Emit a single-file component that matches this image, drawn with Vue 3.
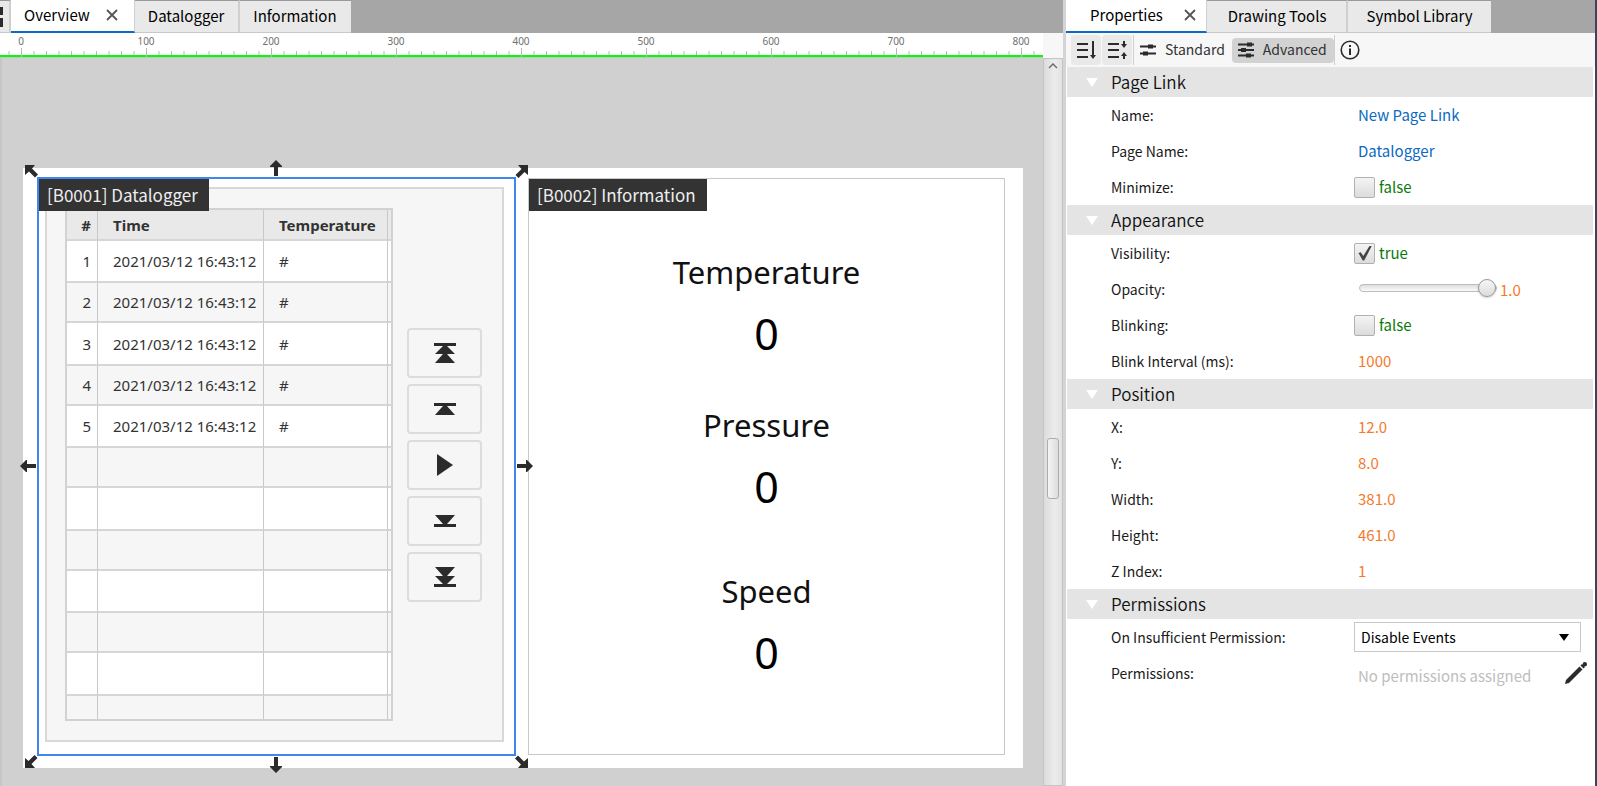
<template>
  <div class="editor">
    <main class="workspace">
      <nav class="tab-bar">
        <button class="tab tab-home" aria-label="Home">
          <svg width="3" height="20" viewBox="0 0 3 20"><path d="M0 0h3v8H0zM0 11h3v9H0z" fill="#2b2b2b" /></svg>
        </button>
        <button v-for="tab in pageTabs" :key="tab" class="tab" :class="{ active: tab === activePage }" @click="activePage = tab">
          {{ tab }}
          <svg v-if="tab === activePage" class="tab-close" width="12" height="12" viewBox="0 0 12 12">
            <path d="M1 1l10 10M11 1L1 11" stroke="#555" stroke-width="1.8" />
          </svg>
        </button>
      </nav>

      <div class="stage">
        <div class="stage-main">
          <svg class="ruler" height="25">
            <rect x="0" y="22" width="100%" height="2" fill="#00ff00" />
            <g v-for="tick in ticks" :key="tick.value">
              <rect :x="tick.x" :y="tick.major ? 15 : 18" width="1" :height="tick.major ? 9 : 4" fill="#b8b8b8" />
              <text v-if="tick.major" :x="tick.x" y="12" text-anchor="middle">{{ tick.value }}</text>
            </g>
          </svg>

          <div class="canvas">
            <div class="page">
              <!-- Datalogger page link, selected -->
              <section class="block selected" :style="blockStyle(blocks[0])">
                <h3 class="block-tag">{{ blocks[0].title }}</h3>
                <div class="logger">
                  <div class="logger-table">
                    <table>
                      <thead>
                        <tr>
                          <th class="col-no">#</th>
                          <th class="col-time">Time</th>
                          <th class="col-value">Temperature</th>
                          <th class="col-end"></th>
                        </tr>
                      </thead>
                      <tbody>
                        <tr v-for="n in 12" :key="n">
                          <td class="col-no">{{ n <= 5 ? n : '' }}</td>
                          <td>{{ n <= 5 ? '2021/03/12 16:43:12' : '' }}</td>
                          <td>{{ n <= 5 ? '#' : '' }}</td>
                          <td class="col-end"></td>
                        </tr>
                      </tbody>
                    </table>
                  </div>
                  <div class="pager">
                    <button v-for="btn in pagerButtons" :key="btn.label" :aria-label="btn.label">
                      <svg width="22" height="22" viewBox="0 0 22 22"><path :d="btn.path" fill="#2b2b2b" /></svg>
                    </button>
                  </div>
                </div>

                <!-- Resize handles -->
                <svg v-for="h in sideHandles" :key="h" class="handle side" :class="h" viewBox="0 0 16 16">
                  <path d="M8 0l6 6v1h-4v9H6V7H2V6z" />
                </svg>
                <svg v-for="h in cornerHandles" :key="h" class="handle corner" :class="h" viewBox="0 0 13 13">
                  <path d="M0 0h10L7 3.500l6 6L10 12.500l-6-6L0 10z" />
                </svg>
              </section>

              <!-- Information page link -->
              <section class="block" :style="blockStyle(blocks[1])">
                <h3 class="block-tag">{{ blocks[1].title }}</h3>
                <div v-for="r in readouts" :key="r.label" class="readout" :style="{ top: r.y + 'px' }">
                  <div class="readout-label">{{ r.label }}</div>
                  <div class="readout-value">{{ r.value }}</div>
                </div>
              </section>
            </div>
          </div>
        </div>

        <div class="scroll-side">
          <div class="scroll-corner"></div>
          <div class="scroll-track">
            <svg width="10" height="6" viewBox="0 0 10 6"><path d="M1 5l4-4 4 4" fill="none" stroke="#666" stroke-width="1.3" /></svg>
            <div class="scroll-thumb"></div>
          </div>
        </div>
      </div>
    </main>

    <aside class="panel">
      <nav class="tab-bar">
        <button v-for="tab in panelTabs" :key="tab" class="tab" :class="{ active: tab === activePanel }" @click="activePanel = tab">
          {{ tab }}
          <svg v-if="tab === activePanel" class="tab-close" width="12" height="12" viewBox="0 0 12 12">
            <path d="M1 1l10 10M11 1L1 11" stroke="#555" stroke-width="1.8" />
          </svg>
        </button>
      </nav>

      <div class="toolbar">
        <button class="tool-icon" aria-label="Expand all">
          <svg width="20" height="20" viewBox="0 0 20 20">
            <path d="M1 4h11M1 10h11M1 17h11M17 1v15" stroke="#2b2b2b" stroke-width="2" fill="none" />
            <path d="M14 15h6l-3 4z" fill="#2b2b2b" />
          </svg>
        </button>
        <button class="tool-icon" aria-label="Collapse all">
          <svg width="20" height="20" viewBox="0 0 20 20">
            <path d="M1 4h11M1 10h11M1 17h11M17 1v4M17 15v4" stroke="#2b2b2b" stroke-width="2" fill="none" />
            <path d="M14 4h6l-3 4zM14 16h6l-3-4z" fill="#2b2b2b" />
          </svg>
        </button>
        <span class="divider"></span>
        <button class="mode">
          <svg width="16" height="16" viewBox="0 0 16 16" stroke="#2b2b2b" fill="none">
            <path d="M0 4.500h16M0 11.500h16" stroke-width="2" />
            <path d="M8 4.500h5M3 11.500h5" stroke-width="4" />
          </svg>
          <span>Standard</span>
        </button>
        <button class="mode on">
          <svg width="16" height="16" viewBox="0 0 16 16" stroke="#2b2b2b" fill="none">
            <path d="M0 2.500h16M0 8h16M0 13.500h16" stroke-width="2" />
            <path d="M9 2.500h5M3 8h5M8 13.500h5" stroke-width="4" />
          </svg>
          <span>Advanced</span>
        </button>
        <span class="divider"></span>
        <button class="info" aria-label="Help">
          <svg width="20" height="20" viewBox="0 0 20 20">
            <circle cx="10" cy="10" r="8.800" fill="none" stroke="#2b2b2b" stroke-width="1.600" />
            <path d="M9 5h2v2H9zM9 8.500h2V15H9z" fill="#2b2b2b" />
          </svg>
        </button>
      </div>

      <div class="props">
        <section v-for="group in groups" :key="group.title">
          <h2 class="group-title">
            <svg width="12" height="9" viewBox="0 0 12 9"><path d="M0 0h12L6 9z" fill="#fff" /></svg>
            <span>{{ group.title }}</span>
          </h2>
          <div v-for="prop in group.props" :key="prop.id" class="row">
            <label :for="prop.id">{{ prop.label }}</label>
            <div class="value">
              <template v-if="prop.type === 'bool'">
                <input :id="prop.id" v-model="prop.value" type="checkbox" />
                <span class="bool">{{ prop.value }}</span>
              </template>
              <template v-else-if="prop.type === 'range'">
                <input :id="prop.id" v-model="prop.value" type="range" min="0" max="1" step="0.1" />
                <output class="number">{{ Number(prop.value).toFixed(1) }}</output>
              </template>
              <template v-else-if="prop.type === 'select'">
                <select :id="prop.id" v-model="prop.value">
                  <option>Disable Events</option>
                  <option>Hide</option>
                </select>
                <svg class="select-arrow" width="10" height="7" viewBox="0 0 10 7"><path d="M0 0h10L5 7z" /></svg>
              </template>
              <template v-else-if="prop.type === 'list'">
                <input :id="prop.id" class="field list" type="text" readonly placeholder="No permissions assigned" />
                <button class="edit" aria-label="Edit permissions">
                  <svg width="22" height="22" viewBox="0 0 22 22" fill="#2b2b2b">
                    <path d="M0 22l1-4L14.500 4.500l3 3L4 21z" />
                    <path d="M15.500 3.500l1.500-1.500 3 3-1.500 1.500z" />
                    <circle cx="19.800" cy="2.200" r="2.200" />
                  </svg>
                </button>
              </template>
              <input v-else :id="prop.id" v-model="prop.value" class="field" :class="prop.type" type="text" />
            </div>
          </div>
        </section>
      </div>
    </aside>
  </div>
</template>

<script setup>
import { ref, reactive } from 'vue';

const ZOOM = 1.25;

const pageTabs = ['Overview', 'Datalogger', 'Information'];
const panelTabs = ['Properties', 'Drawing Tools', 'Symbol Library'];
const activePage = ref('Overview');
const activePanel = ref('Properties');

// one tick every 10 units, labelled every 100
const ticks = [];
for (let value = -10; value <= 810; value += 10) {
  ticks.push({ value, x: 21 + value * ZOOM, major: value % 100 === 0 });
}

const blocks = [
  { title: '[B0001] Datalogger', x: 12, y: 8, width: 381, height: 461 },
  { title: '[B0002] Information', x: 404, y: 8, width: 381, height: 461 },
];

function blockStyle(b) {
  return {
    left: Math.round(b.x * ZOOM) + 'px',
    top: Math.round(b.y * ZOOM) + 'px',
    width: Math.ceil(b.width * ZOOM) + 'px',
    height: Math.ceil(b.height * ZOOM) + 'px',
  };
}

const sideHandles = ['n', 'e', 's', 'w'];
const cornerHandles = ['nw', 'ne', 'se', 'sw'];

const pagerButtons = [
  { label: 'First', path: 'M0 1h22v3H13l8 8h-8l8 9H1l8-9H1l8-8H0z' },
  { label: 'Previous', path: 'M0 5h22v3h-9l8 9H1l8-9H0z' },
  { label: 'Play', path: 'M3 0l16 11L3 22z' },
  { label: 'Next', path: 'M0 17h22v-3h-9l8-9H1l8 9H0z' },
  { label: 'Last', path: 'M0 21h22v-3H13l8-8h-8l8-9H1l8 9H1l8 8H0z' },
];

const readouts = [
  { label: 'Temperature', value: 0, y: 71 },
  { label: 'Pressure', value: 0, y: 224 },
  { label: 'Speed', value: 0, y: 390 },
];

const groups = reactive([
  {
    title: 'Page Link',
    props: [
      { id: 'name', label: 'Name:', type: 'text', value: 'New Page Link' },
      { id: 'page-name', label: 'Page Name:', type: 'text', value: 'Datalogger' },
      { id: 'minimize', label: 'Minimize:', type: 'bool', value: false },
    ],
  },
  {
    title: 'Appearance',
    props: [
      { id: 'visibility', label: 'Visibility:', type: 'bool', value: true },
      { id: 'opacity', label: 'Opacity:', type: 'range', value: 1 },
      { id: 'blinking', label: 'Blinking:', type: 'bool', value: false },
      { id: 'blink-interval', label: 'Blink Interval (ms):', type: 'number', value: '1000' },
    ],
  },
  {
    title: 'Position',
    props: [
      { id: 'pos-x', label: 'X:', type: 'number', value: '12.0' },
      { id: 'pos-y', label: 'Y:', type: 'number', value: '8.0' },
      { id: 'width', label: 'Width:', type: 'number', value: '381.0' },
      { id: 'height', label: 'Height:', type: 'number', value: '461.0' },
      { id: 'z-index', label: 'Z Index:', type: 'number', value: '1' },
    ],
  },
  {
    title: 'Permissions',
    props: [
      { id: 'on-insufficient', label: 'On Insufficient Permission:', type: 'select', value: 'Disable Events' },
      { id: 'permissions', label: 'Permissions:', type: 'list' },
    ],
  },
]);
</script>

<style scoped>
.editor {
  display: flex;
  height: 100vh;
  min-height: 720px;
  overflow: hidden;
  background: #fff;
  font-family: "Noto Sans CJK SC", "Noto Sans", sans-serif;
  font-size: 15px;
  color: #1a1a1a;
}

button,
input,
select {
  font: inherit;
  color: inherit;
  margin: 0;
}

button {
  border: none;
  background: none;
  padding: 0;
}

svg {
  display: block;
  flex-shrink: 0;
}

/* Tabs */
.tab-bar {
  display: flex;
  height: 33px;
  flex-shrink: 0;
  background: #a6a6a6;
}

.tab {
  display: flex;
  align-items: center;
  gap: 16px;
  padding: 0 14px 3px 13px;
  background: #e9e9e9;
  border-top: 1px solid #999;
  border-right: 2px solid #cfcfcf;
  border-bottom: 1px solid #c8c8c8;
  color: #000;
  white-space: nowrap;
}

.tab:last-child {
  border-right: none;
}

.tab.active {
  padding: 0 16px 2px 13px;
  background: #fff;
  border-top: none;
  border-right-width: 1px;
  border-bottom: 2px solid #0b6ac2;
}

.tab-home {
  padding: 0 6px 0 0;
}

/* Workspace */
.workspace {
  flex: 1;
  min-width: 0;
  display: flex;
  flex-direction: column;
}

.stage {
  flex: 1;
  min-height: 0;
  display: flex;
}

.stage-main {
  flex: 1;
  min-width: 0;
  display: flex;
  flex-direction: column;
}

.ruler {
  width: 100%;
  background: #fff;
  border-bottom: 1px solid #c4c4c4;
  box-sizing: border-box;
}

.ruler text {
  font-family: "Noto Sans", sans-serif;
  font-size: 10px;
  fill: #707070;
}

.canvas {
  flex: 1;
  min-height: 0;
  overflow: hidden;
  background: #d0d0d0;
  border-left: 2px solid #c6c6c6;
}

.page {
  position: relative;
  width: 1000px;
  height: 600px;
  margin: 110px 0 0 21px;
  background: #fff;
}

.block {
  position: absolute;
  box-sizing: border-box;
  border: 1px solid #c8c8c8;
  background: #fff;
  font-family: "Noto Sans", "Open Sans", sans-serif;
}

.block.selected {
  z-index: 1;
  border-color: #3f86f0;
  box-shadow: 0 0 0 1px #3f86f0;
}

.block-tag {
  position: absolute;
  top: 0;
  left: 0;
  z-index: 1;
  margin: 0;
  padding: 0 11px 0 8px;
  background: #333;
  color: #eee;
  font-family: "Noto Sans CJK SC", "Noto Sans", sans-serif;
  font-size: 17px;
  font-weight: 400;
  line-height: 32px;
  white-space: nowrap;
}

.logger {
  box-sizing: border-box;
  height: 555px;
  margin: 8px 10px 0 6px;
  padding: 0 20px 0 18px;
  display: flex;
  align-items: center;
  justify-content: space-between;
  background: #f6f6f6;
  border: 2px solid #d8d8d8;
}

.logger-table {
  box-sizing: border-box;
  width: 328px;
  height: 513px;
  overflow: hidden;
  border: 2px solid #d2d2d2;
}

.logger-table table {
  width: 100%;
  table-layout: fixed;
  border-collapse: separate;
  border-spacing: 0;
  font-size: 15px;
  color: #333;
}

.logger-table th,
.logger-table td {
  box-sizing: border-box;
  height: 40px;
  padding: 0 0 0 15px;
  text-align: left;
  white-space: nowrap;
  background: #fff;
  border-right: 1px solid #c8c8c8;
  border-bottom: 2px solid #d6d6d6;
}

.logger-table th {
  height: 31px;
  background: #e9e9e9;
  font-weight: 700;
}

.logger-table tr:nth-child(even) td {
  background: #f6f6f6;
}

.logger-table tr:nth-child(odd) td {
  height: 42px;
}

.logger-table tr:nth-child(4n + 3) td {
  height: 43px;
}

.logger-table .col-no {
  width: 31px;
  padding: 0 6px 0 0;
  text-align: right;
}

.logger-table .col-time {
  width: 166px;
}

.logger-table .col-end {
  width: 3px;
  padding: 0;
  border-right: none;
}

.pager {
  display: flex;
  flex-direction: column;
  gap: 6px;
}

.pager button {
  box-sizing: border-box;
  width: 75px;
  height: 50px;
  display: flex;
  align-items: center;
  justify-content: center;
  border: 2px solid #dcdcdc;
  border-radius: 4px;
}

/* Resize handles around the selected block */
.handle {
  position: absolute;
  z-index: 2;
  fill: #2b2b2b;
}

.side {
  width: 16px;
  height: 16px;
}

.corner {
  width: 13px;
  height: 13px;
}

.n { top: -19px; left: calc(50% - 9px); }
.s { bottom: -19px; left: calc(50% - 9px); transform: rotate(180deg); }
.w { left: -19px; top: calc(50% - 9px); transform: rotate(-90deg); }
.e { right: -19px; top: calc(50% - 9px); transform: rotate(90deg); }
.nw { top: -14px; left: -14px; }
.ne { top: -14px; right: -14px; transform: rotate(90deg); }
.se { bottom: -14px; right: -14px; transform: rotate(180deg); }
.sw { bottom: -14px; left: -14px; transform: rotate(-90deg); }

.readout {
  position: absolute;
  left: 0;
  right: 0;
  text-align: center;
  color: #111;
}

.readout-label {
  font-size: 31px;
  line-height: 44px;
  margin-bottom: 10px;
}

.readout-value {
  font-size: 43px;
  line-height: 60px;
  color: #000;
}

/* Scroll bar */
.scroll-side {
  width: 20px;
  display: flex;
  flex-direction: column;
}

.scroll-corner {
  height: 25px;
  background: #f7f7f7;
}

.scroll-track {
  flex: 1;
  display: flex;
  flex-direction: column;
  align-items: center;
  padding-top: 4px;
  border: 1px solid #c4c4c4;
  background: linear-gradient(90deg, #dcdcdc, #ececec 60%, #e2e2e2);
}

.scroll-thumb {
  box-sizing: border-box;
  width: 12px;
  height: 61px;
  margin-top: 369px;
  border: 1px solid #acacac;
  border-radius: 3px;
  background: linear-gradient(90deg, #f4f4f4, #dcdcdc);
}

/* Properties panel */
.panel {
  box-sizing: border-box;
  width: 534px;
  flex-shrink: 0;
  display: flex;
  flex-direction: column;
  border-left: 3px solid #d4d4d4;
  border-right: 2px solid #3f4258;
}

.panel .tab {
  padding: 0 20px 3px 21px;
}

.panel .tab:last-child {
  padding: 0 18px 3px 18px;
}

.panel .tab.active {
  padding: 0 10px 2px 24px;
  gap: 21px;
}

.toolbar {
  display: flex;
  align-items: center;
  height: 34px;
  flex-shrink: 0;
  padding-left: 5px;
  background: #f7f7f7;
  font-size: 14px;
  line-height: 24px;
  color: #333;
}

.tool-icon {
  width: 30px;
  height: 30px;
  margin-right: 1px;
  display: flex;
  align-items: center;
  justify-content: center;
  background: #e9e9e9;
  border-radius: 4px;
}

.divider {
  width: 1px;
  height: 30px;
  background: #cfcfcf;
}

.mode {
  display: flex;
  align-items: center;
  gap: 9px;
  height: 25px;
  padding: 0 7px 0 6px;
  border-radius: 4px;
}

.mode span {
  padding-bottom: 2px;
}

.mode.on {
  background: #d2d2d2;
}

.info {
  margin-left: 5px;
}

.props {
  flex: 1;
  padding: 0 2px 0 1px;
}

.group-title {
  display: flex;
  align-items: center;
  gap: 13px;
  height: 30px;
  margin: 0;
  padding-left: 19px;
  background: #e4e4e4;
  color: #111;
  font-size: 17px;
  font-weight: 350;
}

.group-title span {
  padding-bottom: 2px;
}

.row {
  display: grid;
  grid-template-columns: 243px 1fr;
  align-items: center;
  height: 36px;
  padding: 0 12px 0 44px;
}

.row label {
  font-size: 14px;
}

.value {
  position: relative;
  display: flex;
  align-items: center;
}

.field {
  flex: 1;
  min-width: 0;
  height: 26px;
  padding: 0 4px 2px;
  border: none;
  outline: none;
  background: none;
}

.field.text {
  color: #0b6ac2;
}

.field.list {
  padding: 4px 4px 0;
}

.field::placeholder {
  color: #bdbdbd;
  opacity: 1;
}

.number {
  color: #f47a2b;
}

.bool {
  margin-left: 4px;
  padding-bottom: 2px;
  color: #0b7a0b;
}

input[type="checkbox"] {
  appearance: none;
  position: relative;
  width: 21px;
  height: 21px;
  border: 1px solid #b0b0b0;
  border-radius: 2px;
  background: linear-gradient(#f4f4f4, #dcdcdc);
}

input[type="checkbox"]:checked::after {
  content: "";
  position: absolute;
  inset: 2px;
  background: #444;
  clip-path: polygon(10% 50%, 25% 45%, 42% 70%, 85% 0, 100% 0, 48% 100%, 38% 100%);
}

input[type="range"] {
  appearance: none;
  width: 138px;
  height: 20px;
  margin: 0 3px 2px 5px;
  background: none;
}

input[type="range"]::-webkit-slider-runnable-track {
  box-sizing: border-box;
  height: 8px;
  border: 1px solid #bdbdbd;
  border-radius: 4px;
  background: linear-gradient(#dedede, #fafafa);
}

input[type="range"]::-webkit-slider-thumb {
  appearance: none;
  box-sizing: border-box;
  width: 18px;
  height: 18px;
  margin-top: -6px;
  border: 1px solid #999;
  border-radius: 50%;
  background: linear-gradient(#f6f6f6, #dcdcdc);
  box-shadow: 0 1px 2px rgba(0, 0, 0, 0.2);
}

select {
  appearance: none;
  width: 100%;
  height: 30px;
  padding: 0 6px;
  border: 1px solid #c8c8c8;
  border-radius: 0;
  background: #fff;
  color: #000;
  font-size: 14px;
}

.select-arrow {
  position: absolute;
  right: 12px;
  pointer-events: none;
}

.edit {
  margin-right: -6px;
}
</style>

<style>
body {
  overflow: hidden;
}
</style>
